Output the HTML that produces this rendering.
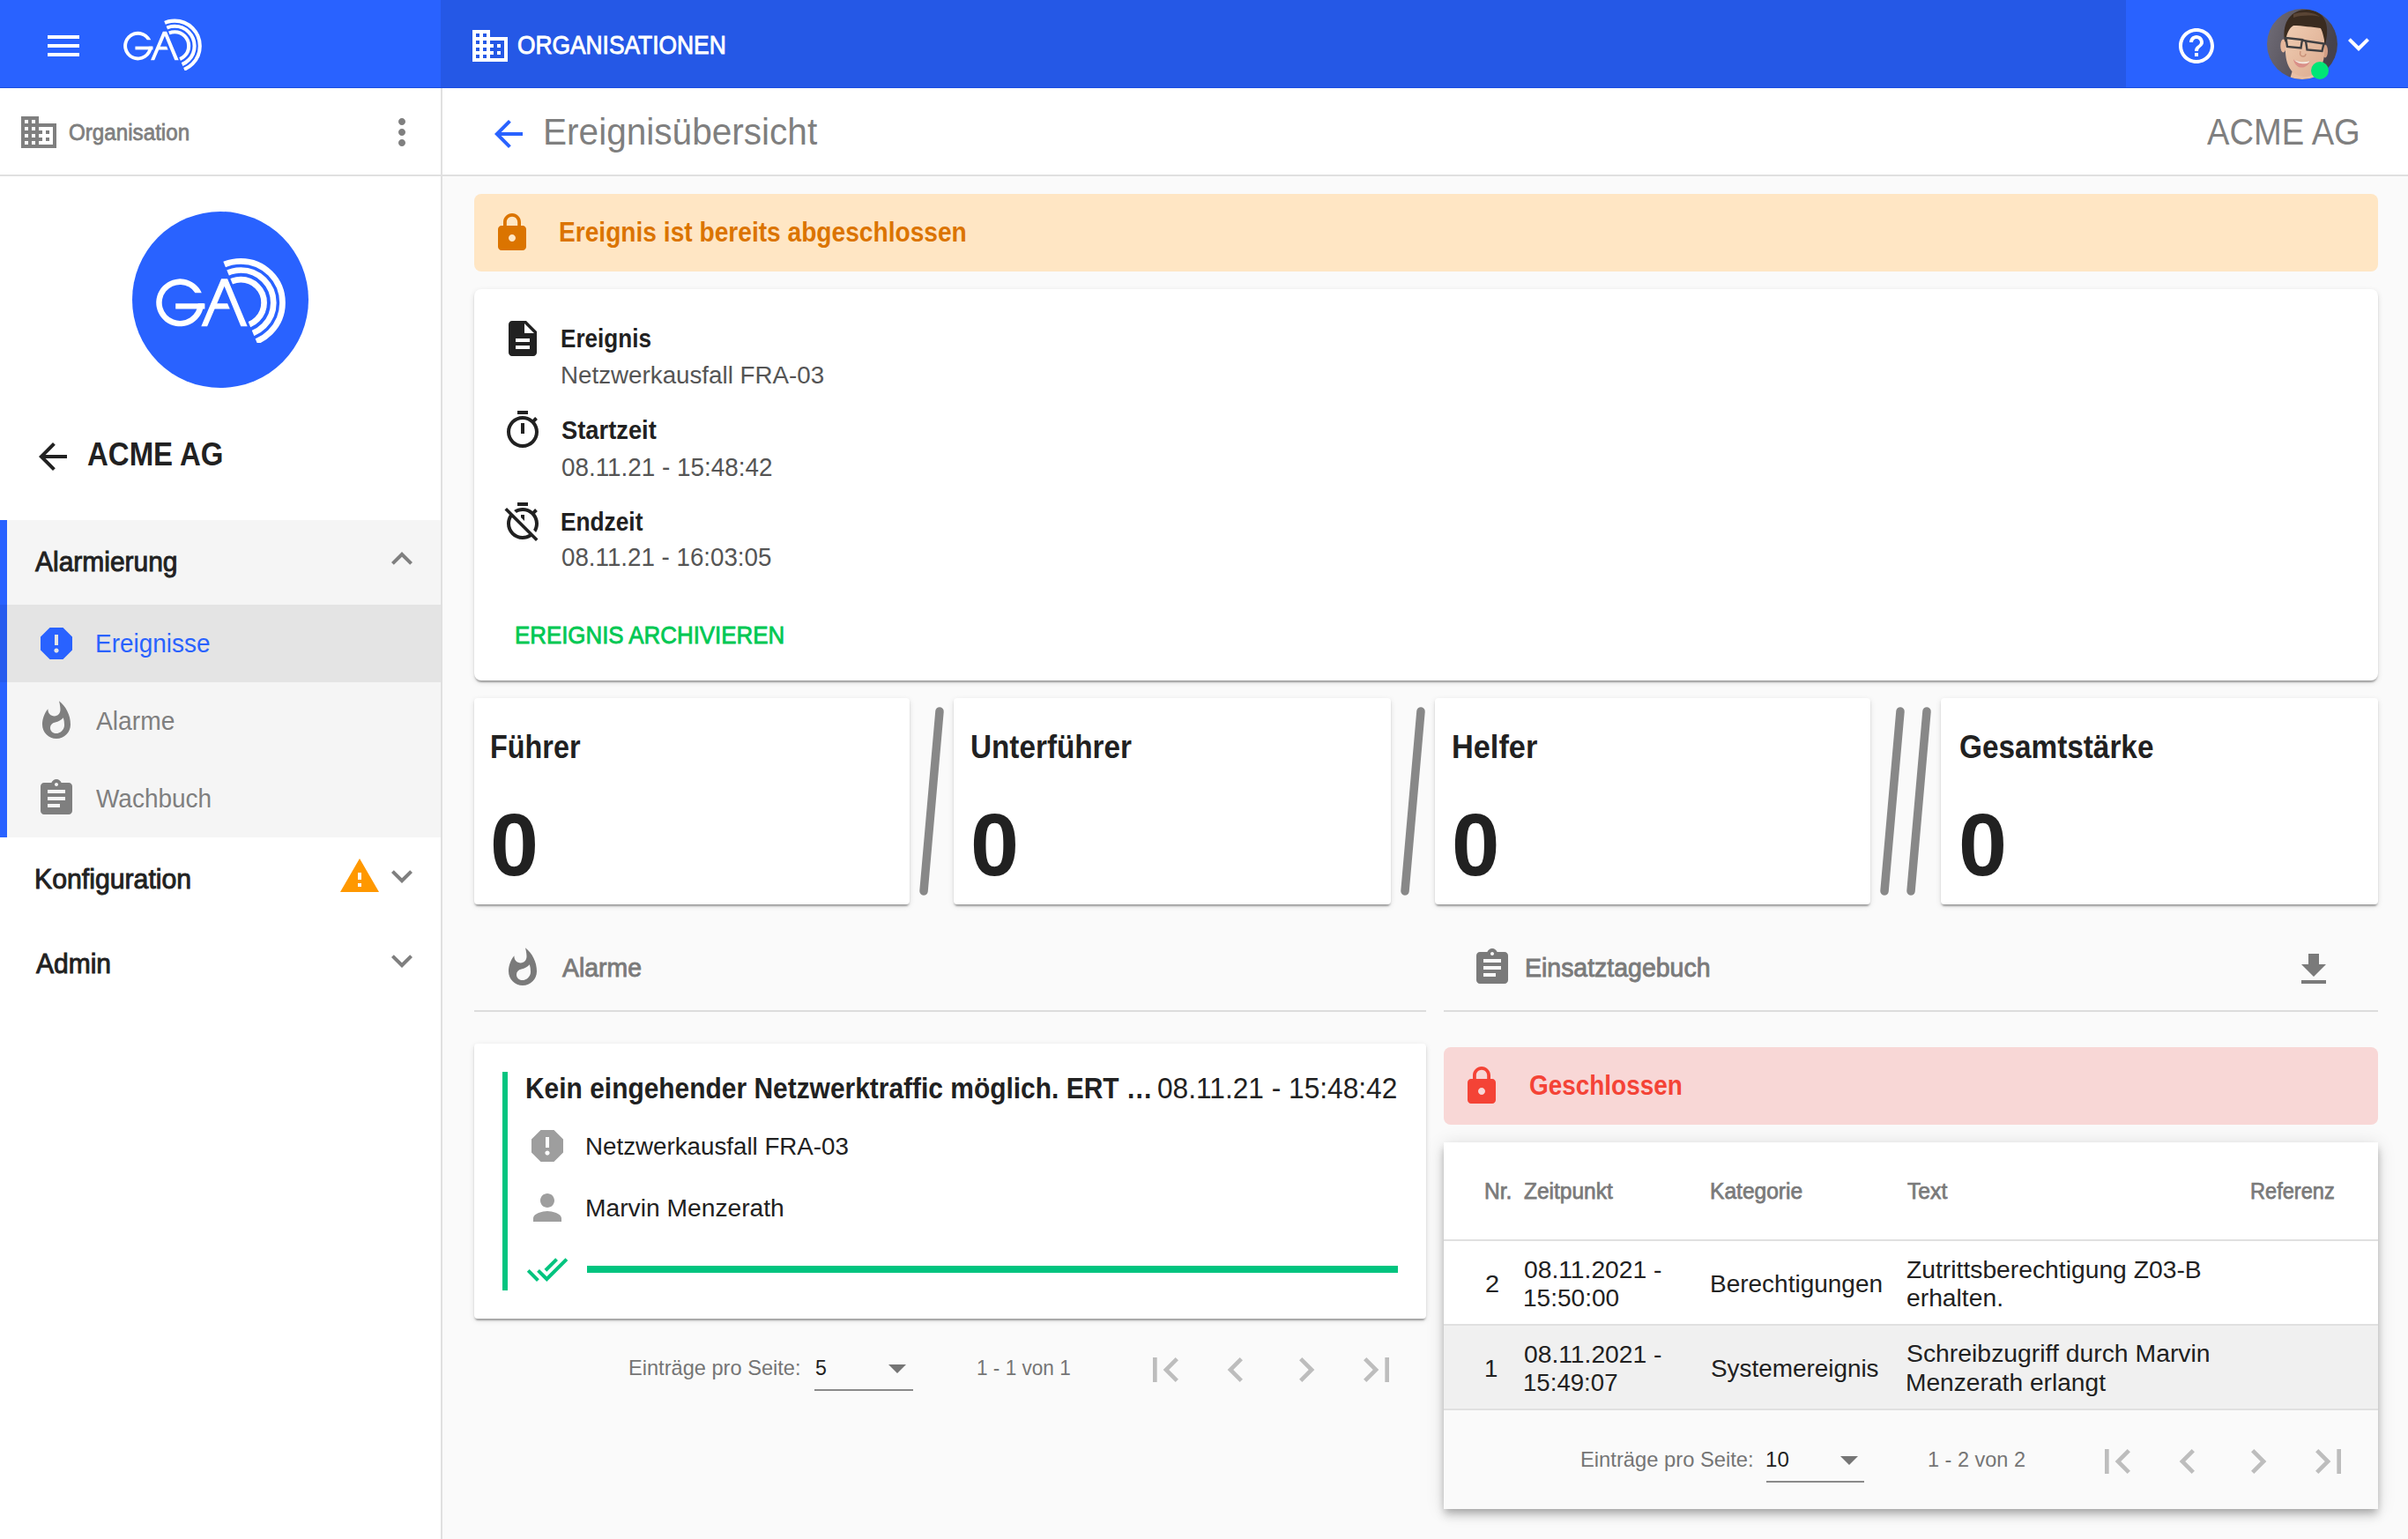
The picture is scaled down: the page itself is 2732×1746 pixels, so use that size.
<!DOCTYPE html>
<html><head><meta charset="utf-8"><title>Ereignisübersicht</title>
<style>
html,body{margin:0;padding:0}
body{width:2732px;height:1746px;position:relative;overflow:hidden;background:#fafafa;font-family:"Liberation Sans",sans-serif}
body>div,body>svg{position:absolute}
.t{white-space:nowrap;transform-origin:0 0}
@media (max-width:2000px){html{zoom:0.5}}
</style></head><body>
<div style="left:0px;top:0px;width:2732px;height:100px;background:#2962ff"></div>
<div style="left:500px;top:0px;width:1912px;height:100px;background:#2558e6"></div>
<div style="left:0px;top:99px;width:2732px;height:1px;background:#1a4de0"></div>
<div style="left:0px;top:100px;width:500px;height:1646px;background:#fff"></div>
<div style="left:500px;top:100px;width:2px;height:1646px;background:#e0e0e0"></div>
<div style="left:0px;top:198px;width:500px;height:2px;background:#e0e0e0"></div>
<div style="left:502px;top:100px;width:2230px;height:98px;background:#fff"></div>
<div style="left:502px;top:198px;width:2230px;height:2px;background:#e0e0e0"></div>
<div style="left:54px;top:40px;width:36px;height:4px;background:#fff"></div>
<div style="left:54px;top:50px;width:36px;height:4px;background:#fff"></div>
<div style="left:54px;top:60px;width:36px;height:4px;background:#fff"></div>
<svg style="left:139.9px;top:20.9px;width:88.935px;height:58.9875px" viewBox="16.8 11.7 147 97.5"><defs><clipPath id="lc1"><polygon points="86.28,0 175,0 175,125 138.18,125"/></clipPath></defs><g fill="#fff"><path d="M68.6 51.9A27 27 0 1 0 71 64L64.5 64A20.5 20.5 0 1 1 61.2 51.9Z"/><rect x="39" y="64" width="33.2" height="6.2"/><polygon points="68.1,89.9 90.9,36 97.9,36 120.5,89.9 113.1,89.9 94.4,44.5 74.9,89.9"/><polygon points="84.5,64 97.9,64 100.6,70.2 81.9,70.2"/></g><g clip-path="url(#lc1)" fill="none" stroke="#fff" stroke-width="6.7"><circle cx="113.1" cy="63.2" r="26.3"/><circle cx="113.1" cy="63.2" r="37.0"/><circle cx="113.1" cy="63.2" r="47.2"/></g></svg>
<svg style="left:532px;top:28px;width:48px;height:48px" viewBox="0 0 24 24"><path fill="#fff" d="M12 7V3H2v18h20V7H12zM6 19H4v-2h2v2zm0-4H4v-2h2v2zm0-4H4V9h2v2zm0-4H4V5h2v2zm4 12H8v-2h2v2zm0-4H8v-2h2v2zm0-4H8V9h2v2zm0-4H8V5h2v2zm10 12h-8v-2h2v-2h-2v-2h2v-2h-2V9h8v10zm-2-8h-2v2h2v-2zm0 4h-2v2h2v-2z"/></svg>
<svg style="left:2468px;top:28px;width:48px;height:48px" viewBox="0 0 24 24"><path fill="#fff" d="M11 18h2v-2h-2v2zm1-16C6.48 2 2 6.48 2 12s4.48 10 10 10 10-4.48 10-10S17.52 2 12 2zm0 18c-4.41 0-8-3.59-8-8s3.59-8 8-8 8 3.59 8 8-3.59 8-8 8zm0-14c-2.21 0-4 1.790-4 4h2c0-1.1.9-2 2-2s2 .9 2 2c0 2-3 1.75-3 5h2c0-2.250 3-2.5 3-5 0-2.21-1.79-4-4-4z"/></svg>
<svg style="left:2652px;top:26px;width:48px;height:48px" viewBox="0 0 24 24"><path fill="#fff" d="M16.59 8.59L12 13.17 7.41 8.59 6 10l6 6 6-6z"/></svg>
<svg style="left:2572px;top:10px;width:80px;height:80px" viewBox="0 0 80 80">
<defs><clipPath id="avc"><circle cx="40" cy="40" r="40"/></clipPath>
<linearGradient id="avbg" x1="0" y1="0" x2="1" y2="0.3"><stop offset="0" stop-color="#726e78"/><stop offset="0.5" stop-color="#5a5660"/><stop offset="1" stop-color="#46424b"/></linearGradient>
<linearGradient id="avsk" x1="0" y1="0" x2="1" y2="1"><stop offset="0" stop-color="#f0cdb3"/><stop offset="1" stop-color="#dcab8f"/></linearGradient></defs>
<g clip-path="url(#avc)">
<rect width="80" height="80" fill="url(#avbg)"/>
<path d="M26 80 L30 66 L58 64 L60 80Z" fill="#e8bfa5"/>
<ellipse cx="18.5" cy="42" rx="3.2" ry="7.5" fill="#e6b79c"/>
<ellipse cx="66" cy="48" rx="3" ry="7.5" fill="#d29e84"/>
<path d="M21 24 C22 17 30 15 44 16 C58 16 65 22 65 34 L65 52 C64 67 56 76 44 77 C30 77 22 67 21 50Z" fill="url(#avsk)"/>
<path d="M20 36 C17 14 28 1 45 1 C61 1 70 12 68 30 L66 42 C65 33 63 26 61 22 C52 21 40 19 30 19 C25 22 22 28 21 38Z" fill="#3a2b1f"/>
<path d="M30 6 C38 3 52 3 60 9 C52 7 40 7 30 10Z" fill="#5a4535"/>
<g fill="none" stroke="#3f3f42" stroke-width="2.4">
<path d="M21.5 33 L40 35 L38.5 44.5 L23 43Z"/><path d="M44 36.5 L64.5 39.5 L62.5 48 L45.5 46.5Z"/><path d="M40 35.5 L44 36.5"/></g>
<path d="M38 48 C37 52 38 54 41 54 C43 54 44 53 44 51" fill="none" stroke="#c99279" stroke-width="1.4"/>
<path d="M30 57.5 C36 61 44 61.5 49 59 C47 65 42 67 38 66.5 C34 66 31 62 30 57.5Z" fill="#d98f88"/>
<path d="M31 58 C36 60.5 43 61 48.5 59.2 C48 61 46 62 43 62.3 C38 62.5 33 61 31 58Z" fill="#f4ebe0"/>
</g></svg>
<div style="left:2622px;top:70px;width:20px;height:20px;background:#00e676;border-radius:50%"></div>
<svg style="left:20px;top:126px;width:48px;height:48px" viewBox="0 0 24 24"><path fill="#7f7f7f" d="M12 7V3H2v18h20V7H12zM6 19H4v-2h2v2zm0-4H4v-2h2v2zm0-4H4V9h2v2zm0-4H4V5h2v2zm4 12H8v-2h2v2zm0-4H8v-2h2v2zm0-4H8V9h2v2zm0-4H8V5h2v2zm10 12h-8v-2h2v-2h-2v-2h2v-2h-2V9h8v10zm-2-8h-2v2h2v-2zm0 4h-2v2h2v-2z"/></svg>
<svg style="left:432px;top:126px;width:48px;height:48px" viewBox="0 0 24 24"><path fill="#7f7f7f" d="M12 8c1.1 0 2-.9 2-2s-.9-2-2-2-2 .9-2 2 .9 2 2 2zm0 2c-1.1 0-2 .9-2 2s.9 2 2 2 2-.9 2-2-.9-2-2-2zm0 6c-1.1 0-2 .9-2 2s.9 2 2 2 2-.9 2-2-.9-2-2-2z"/></svg>
<div style="left:150px;top:240px;width:200px;height:200px;background:#2962ff;border-radius:50%"></div>
<svg style="left:176.8px;top:291.7px;width:147px;height:97.5px" viewBox="16.8 11.7 147 97.5"><defs><clipPath id="lc2"><polygon points="86.28,0 175,0 175,125 138.18,125"/></clipPath></defs><g fill="#fff"><path d="M68.6 51.9A27 27 0 1 0 71 64L64.5 64A20.5 20.5 0 1 1 61.2 51.9Z"/><rect x="39" y="64" width="33.2" height="6.2"/><polygon points="68.1,89.9 90.9,36 97.9,36 120.5,89.9 113.1,89.9 94.4,44.5 74.9,89.9"/><polygon points="84.5,64 97.9,64 100.6,70.2 81.9,70.2"/></g><g clip-path="url(#lc2)" fill="none" stroke="#fff" stroke-width="6.7"><circle cx="113.1" cy="63.2" r="26.3"/><circle cx="113.1" cy="63.2" r="37.0"/><circle cx="113.1" cy="63.2" r="47.2"/></g></svg>
<svg style="left:36px;top:494px;width:48px;height:48px" viewBox="0 0 24 24"><path fill="#212121" d="M20 11H7.830l5.59-5.59L12 4l-8 8 8 8 1.41-1.41L7.83 13H20v-2z"/></svg>
<div style="left:0px;top:590px;width:500px;height:360px;background:#f5f5f5"></div>
<div style="left:0px;top:590px;width:8px;height:360px;background:#2962ff"></div>
<div style="left:0px;top:686px;width:500px;height:88px;background:rgba(0,0,0,.065)"></div>
<svg style="left:432.4px;top:610px;width:48px;height:48px" viewBox="0 0 24 24"><path fill="#7f7f7f" d="M12 8l-6 6 1.41 1.41L12 10.83l4.59 4.58L18 14z"/></svg>
<svg style="left:40px;top:706px;width:48px;height:48px" viewBox="0 0 24 24"><path fill="#2962ff" d="M15.73 3H8.27L3 8.27v7.46L8.27 21h7.46L21 15.73V8.27L15.73 3zM12 17.3c-.72 0-1.3-.58-1.3-1.3 0-.72.58-1.3 1.3-1.3.72 0 1.3.58 1.3 1.3 0 .72-.58 1.3-1.3 1.3zm1-4.3h-2V7h2v6z"/></svg>
<svg style="left:40px;top:794.4px;width:48px;height:48px" viewBox="0 0 24 24"><path fill="#7f7f7f" d="M13.5.67s.74 2.65.74 4.8c0 2.06-1.35 3.73-3.41 3.73-2.070 0-3.63-1.67-3.63-3.73l.03-.36C5.21 7.51 4 10.62 4 14c0 4.42 3.58 8 8 8s8-3.58 8-8C20 8.61 17.41 3.8 13.5.67zM11.71 19c-1.78 0-3.22-1.4-3.22-3.14 0-1.62 1.05-2.76 2.81-3.12 1.77-.36 3.6-1.21 4.62-2.58.39 1.29.59 2.65.59 4.04 0 2.65-2.15 4.8-4.8 4.8z"/></svg>
<svg style="left:40px;top:882px;width:48px;height:48px" viewBox="0 0 24 24"><path fill="#7f7f7f" d="M19 3h-4.18C14.4 1.84 13.3 1 12 1c-1.3 0-2.4.84-2.82 2H5c-1.1 0-2 .9-2 2v14c0 1.1.9 2 2 2h14c1.1 0 2-.9 2-2V5c0-1.1-.9-2-2-2zm-7 0c.55 0 1 .45 1 1s-.45 1-1 1-1-.45-1-1 .45-1 1-1zm2 14H7v-2h7v2zm3-4H7v-2h10v2zm0-4H7V7h10v2z"/></svg>
<svg style="left:384px;top:970px;width:48px;height:48px" viewBox="0 0 24 24"><path fill="#ff9800" d="M1 21h22L12 2 1 21zm12-3h-2v-2h2v2zm0-4h-2v-4h2v4z"/></svg>
<svg style="left:432.4px;top:970px;width:48px;height:48px" viewBox="0 0 24 24"><path fill="#7f7f7f" d="M16.59 8.59L12 13.17 7.41 8.59 6 10l6 6 6-6z"/></svg>
<svg style="left:432.4px;top:1066px;width:48px;height:48px" viewBox="0 0 24 24"><path fill="#7f7f7f" d="M16.59 8.59L12 13.17 7.41 8.59 6 10l6 6 6-6z"/></svg>
<svg style="left:553px;top:128px;width:48px;height:48px" viewBox="0 0 24 24"><path fill="#2962ff" d="M20 11H7.830l5.59-5.59L12 4l-8 8 8 8 1.41-1.41L7.83 13H20v-2z"/></svg>
<div style="left:538px;top:220px;width:2160px;height:88px;background:#ffe6c4;border-radius:8px"></div>
<svg style="left:557px;top:240px;width:48px;height:48px" viewBox="0 0 24 24"><path fill="#db7400" d="M18 8h-1V6c0-2.76-2.24-5-5-5S7 3.24 7 6v2H6c-1.1 0-2 .9-2 2v10c0 1.1.9 2 2 2h12c1.1 0 2-.9 2-2V10c0-1.1-.9-2-2-2zm-6 9c-1.1 0-2-.9-2-2s.9-2 2-2 2 .9 2 2-.9 2-2 2zm3.1-9H8.9V6c0-1.71 1.39-3.1 3.1-3.1 1.71 0 3.1 1.39 3.1 3.1v2z"/></svg>
<div style="left:538px;top:328px;width:2160px;height:444px;background:#fff;border-radius:8px;box-shadow:0 4px 2px -2px rgba(0,0,0,.2),0 2px 2px 0 rgba(0,0,0,.14),0 2px 6px 0 rgba(0,0,0,.12);"></div>
<svg style="left:568.7px;top:360px;width:48px;height:48px" viewBox="0 0 24 24"><path fill="#212121" d="M14 2H6c-1.1 0-1.99.9-1.99 2L4 20c0 1.1.89 2 1.99 2H18c1.1 0 2-.9 2-2V8l-6-6zm2 16H8v-2h8v2zm0-4H8v-2h8v2zm-3-5V3.5L18.5 9H13z"/></svg>
<svg style="left:569px;top:464px;width:48px;height:48px" viewBox="0 0 24 24"><path fill="#212121" d="M15 1H9v2h6V1zm-4 13h2V8h-2v6zm8.03-6.61l1.42-1.42c-.43-.51-.9-.99-1.41-1.41l-1.42 1.42C16.07 4.74 14.12 4 12 4c-4.97 0-9 4.03-9 9s4.02 9 9 9 9-4.03 9-9c0-2.12-.74-4.07-1.97-5.61zM12 20c-3.87 0-7-3.13-7-7s3.13-7 7-7 7 3.13 7 7-3.13 7-7 7z"/></svg>
<svg style="left:569px;top:568px;width:48px;height:48px" viewBox="0 0 24 24"><path fill="#212121" d="M19.04 4.55l-1.42 1.42C16.07 4.74 14.12 4 12 4c-1.83 0-3.53.55-4.95 1.48l1.46 1.46C9.53 6.35 10.73 6 12 6c3.87 0 7 3.13 7 7 0 1.27-.35 2.47-.94 3.49l1.45 1.45C20.45 16.53 21 14.830 21 13c0-2.12-.74-4.07-1.97-5.61l1.42-1.42-1.41-1.42zM15 1H9v2h6V1zm-4 8.44l2 2V8h-2v1.44zM3.02 4L1.75 5.27 4.5 8.03C3.55 9.45 3 11.16 3 13c0 4.97 4.02 9 9 9 1.84 0 3.55-.55 4.98-1.5l2.5 2.5 1.27-1.27-7.71-7.71L3.02 4zM12 20c-3.87 0-7-3.13-7-7 0-1.28.35-2.48.95-3.52l9.56 9.56c-1.03.61-2.23.96-3.51.96z"/></svg>
<div style="left:538px;top:792px;width:494px;height:234px;background:#fff;border-radius:4px;box-shadow:0 4px 2px -2px rgba(0,0,0,.2),0 2px 2px 0 rgba(0,0,0,.14),0 2px 6px 0 rgba(0,0,0,.12);"></div>
<div style="left:1082px;top:792px;width:496px;height:234px;background:#fff;border-radius:4px;box-shadow:0 4px 2px -2px rgba(0,0,0,.2),0 2px 2px 0 rgba(0,0,0,.14),0 2px 6px 0 rgba(0,0,0,.12);"></div>
<div style="left:1628px;top:792px;width:494px;height:234px;background:#fff;border-radius:4px;box-shadow:0 4px 2px -2px rgba(0,0,0,.2),0 2px 2px 0 rgba(0,0,0,.14),0 2px 6px 0 rgba(0,0,0,.12);"></div>
<div style="left:2202px;top:792px;width:496px;height:234px;background:#fff;border-radius:4px;box-shadow:0 4px 2px -2px rgba(0,0,0,.2),0 2px 2px 0 rgba(0,0,0,.14),0 2px 6px 0 rgba(0,0,0,.12);"></div>
<svg style="left:0;top:0;width:2732px;height:1746px" viewBox="0 0 2732 1746"><g stroke="#888" stroke-width="9.5" stroke-linecap="round"><line x1="1066" y1="807" x2="1048" y2="1011"/><line x1="1612" y1="807" x2="1594" y2="1011"/><line x1="2156" y1="807" x2="2138" y2="1011"/><line x1="2186" y1="807" x2="2168" y2="1011"/></g></svg>
<svg style="left:568.8px;top:1074.3px;width:48px;height:48px" viewBox="0 0 24 24"><path fill="#7a7a7a" d="M13.5.67s.74 2.65.74 4.8c0 2.06-1.35 3.73-3.41 3.73-2.070 0-3.63-1.67-3.63-3.73l.03-.36C5.21 7.51 4 10.62 4 14c0 4.42 3.58 8 8 8s8-3.58 8-8C20 8.61 17.41 3.8 13.5.67zM11.71 19c-1.78 0-3.22-1.4-3.22-3.14 0-1.62 1.05-2.76 2.81-3.12 1.77-.36 3.6-1.21 4.62-2.58.39 1.29.59 2.65.59 4.04 0 2.65-2.15 4.8-4.8 4.8z"/></svg>
<svg style="left:1668.9px;top:1074px;width:48px;height:48px" viewBox="0 0 24 24"><path fill="#7a7a7a" d="M19 3h-4.18C14.4 1.84 13.3 1 12 1c-1.3 0-2.4.84-2.82 2H5c-1.1 0-2 .9-2 2v14c0 1.1.9 2 2 2h14c1.1 0 2-.9 2-2V5c0-1.1-.9-2-2-2zm-7 0c.55 0 1 .45 1 1s-.45 1-1 1-1-.45-1-1 .45-1 1-1zm2 14H7v-2h7v2zm3-4H7v-2h10v2zm0-4H7V7h10v2z"/></svg>
<svg style="left:2601px;top:1076px;width:48px;height:48px" viewBox="0 0 24 24"><path fill="#7a7a7a" d="M19 9h-4V3H9v6H5l7 7 7-7zM5 18v2h14v-2H5z"/></svg>
<div style="left:538px;top:1146px;width:1080px;height:2px;background:#dcdcdc"></div>
<div style="left:1638px;top:1146px;width:1060px;height:2px;background:#dcdcdc"></div>
<div style="left:538px;top:1184px;width:1080px;height:312px;background:#fff;border-radius:4px;box-shadow:0 4px 2px -2px rgba(0,0,0,.2),0 2px 2px 0 rgba(0,0,0,.14),0 2px 6px 0 rgba(0,0,0,.12);"></div>
<div style="left:570px;top:1216px;width:6px;height:248px;background:#00c47f"></div>
<svg style="left:597px;top:1276px;width:48px;height:48px" viewBox="0 0 24 24"><path fill="#9e9e9e" d="M15.73 3H8.27L3 8.27v7.46L8.27 21h7.46L21 15.73V8.27L15.73 3zM12 17.3c-.72 0-1.3-.58-1.3-1.3 0-.72.58-1.3 1.3-1.3.72 0 1.3.58 1.3 1.3 0 .72-.58 1.3-1.3 1.3zm1-4.3h-2V7h2v6z"/></svg>
<svg style="left:597px;top:1345.7px;width:48px;height:48px" viewBox="0 0 24 24"><path fill="#9e9e9e" d="M12 12c2.21 0 4-1.79 4-4s-1.79-4-4-4-4 1.79-4 4 1.79 4 4 4zm0 2c-2.67 0-8 1.34-8 4v2h16v-2c0-2.66-5.33-4-8-4z"/></svg>
<svg style="left:597.4px;top:1415.8px;width:48px;height:48px" viewBox="0 0 24 24"><path fill="#00c47f" d="M18 7l-1.41-1.41-6.34 6.34 1.41 1.41L18 7zm4.24-1.41L11.66 16.17 7.48 12l-1.41 1.41L11.66 19l12-12-1.42-1.41zM.41 13.41L6 19l1.41-1.41L1.83 12 .41 13.41z"/></svg>
<div style="left:666px;top:1436px;width:920px;height:8px;background:#00c47f"></div>
<div style="left:924px;top:1576px;width:112px;height:2px;background:#8a8a8a"></div>
<svg style="left:1008.2px;top:1548px;width:20px;height:10px" viewBox="0 0 20 10"><path d="M0 0H20L10 10Z" fill="#757575"/></svg>
<svg style="left:1294px;top:1526px;width:56px;height:56px" viewBox="0 0 24 24"><path fill="#bdbdbd" d="M18.41 16.59L13.82 12l4.59-4.59L17 6l-6 6 6 6zM6 6h2v12H6z"/></svg>
<svg style="left:1374px;top:1526px;width:56px;height:56px" viewBox="0 0 24 24"><path fill="#bdbdbd" d="M15.41 7.41L14 6l-6 6 6 6 1.41-1.41L10.83 12z"/></svg>
<svg style="left:1454px;top:1526px;width:56px;height:56px" viewBox="0 0 24 24"><path fill="#bdbdbd" d="M10 6L8.59 7.41 13.17 12l-4.58 4.59L10 18l6-6z"/></svg>
<svg style="left:1534px;top:1526px;width:56px;height:56px" viewBox="0 0 24 24"><path fill="#bdbdbd" d="M5.59 7.41L10.18 12l-4.59 4.59L7 18l6-6-6-6zM16 6h2v12h-2z"/></svg>
<div style="left:1638px;top:1188px;width:1060px;height:88px;background:#f8d7d6;border-radius:8px"></div>
<svg style="left:1657px;top:1208px;width:48px;height:48px" viewBox="0 0 24 24"><path fill="#f44336" d="M18 8h-1V6c0-2.76-2.24-5-5-5S7 3.24 7 6v2H6c-1.1 0-2 .9-2 2v10c0 1.1.9 2 2 2h12c1.1 0 2-.9 2-2V10c0-1.1-.9-2-2-2zm-6 9c-1.1 0-2-.9-2-2s.9-2 2-2 2 .9 2 2-.9 2-2 2zm3.1-9H8.9V6c0-1.71 1.39-3.1 3.1-3.1 1.71 0 3.1 1.39 3.1 3.1v2z"/></svg>
<div style="left:1638px;top:1296px;width:1060px;height:416px;background:#fff;box-shadow:0 4px 8px -2px rgba(0,0,0,.2),0 8px 10px 0 rgba(0,0,0,.14),0 2px 20px 0 rgba(0,0,0,.12)"></div>
<div style="left:1638px;top:1406px;width:1060px;height:2px;background:#e0e0e0"></div>
<div style="left:1638px;top:1504px;width:1060px;height:94px;background:#f0f0f0"></div>
<div style="left:1638px;top:1502px;width:1060px;height:2px;background:#e0e0e0"></div>
<div style="left:1638px;top:1598px;width:1060px;height:2px;background:#e0e0e0"></div>
<div style="left:1638px;top:1600px;width:1060px;height:112px;background:#fafafa"></div>
<div style="left:2004.4px;top:1680px;width:110.7px;height:2px;background:#8a8a8a"></div>
<svg style="left:2087.8px;top:1652px;width:20px;height:10px" viewBox="0 0 20 10"><path d="M0 0H20L10 10Z" fill="#757575"/></svg>
<svg style="left:2374.4px;top:1630px;width:56px;height:56px" viewBox="0 0 24 24"><path fill="#bdbdbd" d="M18.41 16.59L13.82 12l4.59-4.59L17 6l-6 6 6 6zM6 6h2v12H6z"/></svg>
<svg style="left:2454.4px;top:1630px;width:56px;height:56px" viewBox="0 0 24 24"><path fill="#bdbdbd" d="M15.41 7.41L14 6l-6 6 6 6 1.41-1.41L10.83 12z"/></svg>
<svg style="left:2534.4px;top:1630px;width:56px;height:56px" viewBox="0 0 24 24"><path fill="#bdbdbd" d="M10 6L8.59 7.41 13.17 12l-4.58 4.59L10 18l6-6z"/></svg>
<svg style="left:2614.4px;top:1630px;width:56px;height:56px" viewBox="0 0 24 24"><path fill="#bdbdbd" d="M5.59 7.41L10.18 12l-4.59 4.59L7 18l6-6-6-6zM16 6h2v12h-2z"/></svg>
<div class="t" style="left:586.7px;top:35.5px;font-size:29.51px;line-height:29.51px;color:#ffffff;-webkit-text-stroke:0.89px #ffffff;transform:scaleX(0.8931)">ORGANISATIONEN</div>
<div class="t" style="left:78.1px;top:136.8px;font-size:26.16px;line-height:26.16px;color:#7f7f7f;-webkit-text-stroke:0.78px #7f7f7f;transform:scaleX(0.9247)">Organisation</div>
<div class="t" style="left:615.8px;top:128.6px;font-size:42.15px;line-height:42.15px;color:#7f7f7f;transform:scaleX(0.9628)">Ereignisübersicht</div>
<div class="t" style="left:2504.0px;top:128.7px;font-size:42.15px;line-height:42.15px;color:#7f7f7f;transform:scaleX(0.9048)">ACME AG</div>
<div class="t" style="left:99.1px;top:498.3px;font-size:36.34px;line-height:36.34px;color:#212121;font-weight:700;transform:scaleX(0.9078)">ACME AG</div>
<div class="t" style="left:40.4px;top:621.9px;font-size:31.25px;line-height:31.25px;color:#212121;-webkit-text-stroke:0.94px #212121;transform:scaleX(0.9587)">Alarmierung</div>
<div class="t" style="left:107.6px;top:716.2px;font-size:28.92px;line-height:28.92px;color:#2962ff;transform:scaleX(0.9667)">Ereignisse</div>
<div class="t" style="left:108.6px;top:803.6px;font-size:28.92px;line-height:28.92px;color:#7f7f7f;transform:scaleX(0.9769)">Alarme</div>
<div class="t" style="left:108.6px;top:892.4px;font-size:28.92px;line-height:28.92px;color:#7f7f7f;transform:scaleX(0.9679)">Wachbuch</div>
<div class="t" style="left:39.0px;top:981.9px;font-size:31.25px;line-height:31.25px;color:#212121;-webkit-text-stroke:0.94px #212121;transform:scaleX(0.9674)">Konfiguration</div>
<div class="t" style="left:40.5px;top:1077.9px;font-size:31.25px;line-height:31.25px;color:#212121;-webkit-text-stroke:0.94px #212121;transform:scaleX(0.9598)">Admin</div>
<div class="t" style="left:634.0px;top:248.3px;font-size:31.25px;line-height:31.25px;color:#db7400;font-weight:700;transform:scaleX(0.9002)">Ereignis ist bereits abgeschlossen</div>
<div class="t" style="left:636.0px;top:369.7px;font-size:28.92px;line-height:28.92px;color:#212121;font-weight:700;transform:scaleX(0.9027)">Ereignis</div>
<div class="t" style="left:635.8px;top:411.4px;font-size:28.34px;line-height:28.34px;color:#555555;transform:scaleX(0.9795)">Netzwerkausfall FRA-03</div>
<div class="t" style="left:636.9px;top:473.8px;font-size:28.92px;line-height:28.92px;color:#212121;font-weight:700;transform:scaleX(0.9451)">Startzeit</div>
<div class="t" style="left:636.8px;top:516.4px;font-size:28.92px;line-height:28.92px;color:#555555;transform:scaleX(0.9630)">08.11.21 - 15:48:42</div>
<div class="t" style="left:636.0px;top:578.4px;font-size:28.92px;line-height:28.92px;color:#212121;font-weight:700;transform:scaleX(0.9089)">Endzeit</div>
<div class="t" style="left:636.8px;top:618.3px;font-size:28.92px;line-height:28.92px;color:#555555;transform:scaleX(0.9591)">08.11.21 - 16:03:05</div>
<div class="t" style="left:584.2px;top:705.8px;font-size:28.49px;line-height:28.49px;color:#00c853;-webkit-text-stroke:0.85px #00c853;transform:scaleX(0.9081)">EREIGNIS ARCHIVIEREN</div>
<div class="t" style="left:556.1px;top:830.0px;font-size:36.92px;line-height:36.92px;color:#212121;font-weight:700;transform:scaleX(0.8774)">Führer</div>
<div class="t" style="left:1101.0px;top:829.9px;font-size:36.92px;line-height:36.92px;color:#212121;font-weight:700;transform:scaleX(0.9015)">Unterführer</div>
<div class="t" style="left:1646.8px;top:830.4px;font-size:36.92px;line-height:36.92px;color:#212121;font-weight:700;transform:scaleX(0.9294)">Helfer</div>
<div class="t" style="left:2222.6px;top:829.9px;font-size:36.92px;line-height:36.92px;color:#212121;font-weight:700;transform:scaleX(0.9029)">Gesamtstärke</div>
<div class="t" style="left:555.9px;top:908.0px;font-size:100.00px;line-height:100.00px;color:#212121;font-weight:700;transform:scaleX(0.9896)">0</div>
<div class="t" style="left:1101.2px;top:908.0px;font-size:100.00px;line-height:100.00px;color:#212121;font-weight:700;transform:scaleX(0.9896)">0</div>
<div class="t" style="left:1647.1px;top:908.0px;font-size:100.00px;line-height:100.00px;color:#212121;font-weight:700;transform:scaleX(0.9771)">0</div>
<div class="t" style="left:2221.8px;top:908.0px;font-size:100.00px;line-height:100.00px;color:#212121;font-weight:700;transform:scaleX(0.9896)">0</div>
<div class="t" style="left:638.4px;top:1082.5px;font-size:29.80px;line-height:29.80px;color:#7a7a7a;-webkit-text-stroke:0.89px #7a7a7a;transform:scaleX(0.9532)">Alarme</div>
<div class="t" style="left:1730.3px;top:1082.5px;font-size:29.80px;line-height:29.80px;color:#7a7a7a;-webkit-text-stroke:0.89px #7a7a7a;transform:scaleX(0.9553)">Einsatztagebuch</div>
<div class="t" style="left:596.4px;top:1218.0px;font-size:33.14px;line-height:33.14px;color:#212121;font-weight:700;transform:scaleX(0.9035)">Kein eingehender Netzwerktraffic möglich. ERT …</div>
<div class="t" style="left:1312.8px;top:1218.0px;font-size:33.14px;line-height:33.14px;color:#212121;transform:scaleX(0.9560)">08.11.21 - 15:48:42</div>
<div class="t" style="left:664.0px;top:1285.7px;font-size:28.34px;line-height:28.34px;color:#212121;transform:scaleX(0.9788)">Netzwerkausfall FRA-03</div>
<div class="t" style="left:664.0px;top:1356.2px;font-size:28.34px;line-height:28.34px;color:#212121;transform:scaleX(0.9960)">Marvin Menzerath</div>
<div class="t" style="left:713.3px;top:1539.8px;font-size:24.71px;line-height:24.71px;color:#757575;transform:scaleX(0.9555)">Einträge pro Seite:</div>
<div class="t" style="left:924.5px;top:1539.8px;font-size:24.71px;line-height:24.71px;color:#212121;transform:scaleX(0.9333)">5</div>
<div class="t" style="left:1107.5px;top:1539.8px;font-size:24.71px;line-height:24.71px;color:#757575;transform:scaleX(0.9149)">1 - 1 von 1</div>
<div class="t" style="left:1735.0px;top:1216.2px;font-size:31.25px;line-height:31.25px;color:#f44336;font-weight:700;transform:scaleX(0.8932)">Geschlossen</div>
<div class="t" style="left:1684.0px;top:1338.7px;font-size:25.00px;line-height:25.00px;color:#7a7a7a;-webkit-text-stroke:0.75px #7a7a7a;transform:scaleX(0.9821)">Nr.</div>
<div class="t" style="left:1729.2px;top:1338.7px;font-size:25.00px;line-height:25.00px;color:#7a7a7a;-webkit-text-stroke:0.75px #7a7a7a;transform:scaleX(0.9796)">Zeitpunkt</div>
<div class="t" style="left:1940.0px;top:1338.7px;font-size:25.00px;line-height:25.00px;color:#7a7a7a;-webkit-text-stroke:0.75px #7a7a7a;transform:scaleX(0.9827)">Kategorie</div>
<div class="t" style="left:2164.0px;top:1338.7px;font-size:25.00px;line-height:25.00px;color:#7a7a7a;-webkit-text-stroke:0.75px #7a7a7a;transform:scaleX(0.9870)">Text</div>
<div class="t" style="left:2552.5px;top:1338.7px;font-size:25.00px;line-height:25.00px;color:#7a7a7a;-webkit-text-stroke:0.75px #7a7a7a;transform:scaleX(0.9434)">Referenz</div>
<div class="t" style="left:1685.0px;top:1441.9px;font-size:28.34px;line-height:28.34px;color:#212121;transform:scaleX(1.0214)">2</div>
<div class="t" style="left:1728.7px;top:1425.7px;font-size:28.34px;line-height:28.34px;color:#212121;transform:scaleX(0.9968)">08.11.2021 -</div>
<div class="t" style="left:1727.7px;top:1457.6px;font-size:28.34px;line-height:28.34px;color:#212121;transform:scaleX(0.9897)">15:50:00</div>
<div class="t" style="left:1940.0px;top:1441.9px;font-size:28.34px;line-height:28.34px;color:#212121;transform:scaleX(0.9877)">Berechtigungen</div>
<div class="t" style="left:2163.0px;top:1425.9px;font-size:28.34px;line-height:28.34px;color:#212121;transform:scaleX(0.9979)">Zutrittsberechtigung Z03-B</div>
<div class="t" style="left:2163.0px;top:1458.3px;font-size:28.34px;line-height:28.34px;color:#212121;transform:scaleX(0.9981)">erhalten.</div>
<div class="t" style="left:1684.0px;top:1537.9px;font-size:28.34px;line-height:28.34px;color:#212121;transform:scaleX(0.9750)">1</div>
<div class="t" style="left:1728.7px;top:1521.7px;font-size:28.34px;line-height:28.34px;color:#212121;transform:scaleX(0.9968)">08.11.2021 -</div>
<div class="t" style="left:1727.8px;top:1553.6px;font-size:28.34px;line-height:28.34px;color:#212121;transform:scaleX(0.9750)">15:49:07</div>
<div class="t" style="left:1941.0px;top:1537.9px;font-size:28.34px;line-height:28.34px;color:#212121;transform:scaleX(0.9839)">Systemereignis</div>
<div class="t" style="left:2163.0px;top:1521.4px;font-size:28.34px;line-height:28.34px;color:#212121;transform:scaleX(1.0009)">Schreibzugriff durch Marvin</div>
<div class="t" style="left:2162.0px;top:1553.7px;font-size:28.34px;line-height:28.34px;color:#212121;transform:scaleX(0.9942)">Menzerath erlangt</div>
<div class="t" style="left:1792.9px;top:1644.3px;font-size:24.71px;line-height:24.71px;color:#757575;transform:scaleX(0.9610)">Einträge pro Seite:</div>
<div class="t" style="left:2002.5px;top:1644.3px;font-size:24.71px;line-height:24.71px;color:#212121;transform:scaleX(0.9750)">10</div>
<div class="t" style="left:2186.5px;top:1644.3px;font-size:24.71px;line-height:24.71px;color:#757575;transform:scaleX(0.9509)">1 - 2 von 2</div>
</body></html>
